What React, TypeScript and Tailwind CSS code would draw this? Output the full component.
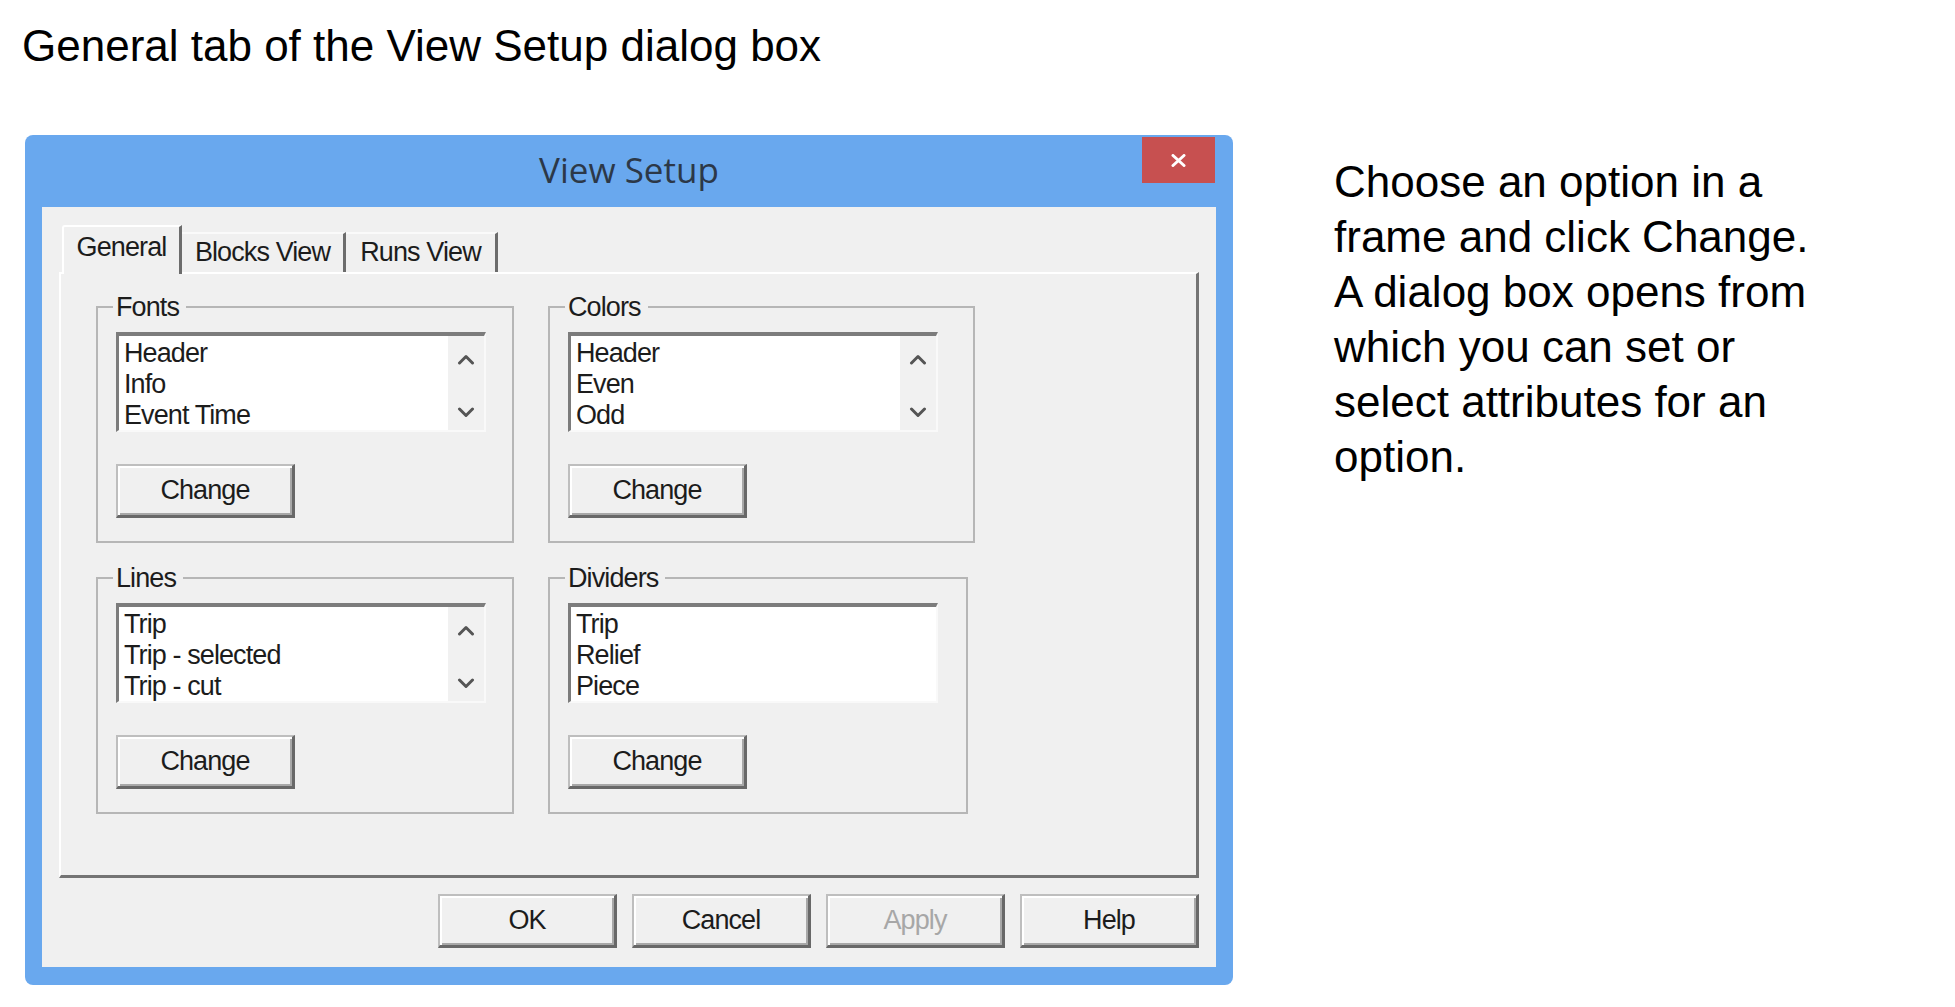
import React from 'react';

const uiFont = "font-['Liberation_Sans',Arial,sans-serif] text-[27px] tracking-[-0.9px] text-[#1c1c1c]";

interface ClassicButtonProps {
  label: string;
  disabled?: boolean;
}

function ClassicButton({ label, disabled }: ClassicButtonProps) {
  return (
    <button
      className={`flex h-[54px] w-[179px] items-center justify-center border-t-2 border-l-2 border-r-[3px] border-b-[3px] border-t-[#bebebe] border-l-[#bebebe] border-r-[#686868] border-b-[#686868] bg-[#f0f0f0] leading-none shadow-[inset_2px_2px_0_#ffffff,inset_-2px_-2px_0_#a8a8a8] ${
        disabled ? 'text-[#a7a7a7]' : 'text-[#1c1c1c]'
      }`}
    >
      {label}
    </button>
  );
}

function Chevron({ up }: { up?: boolean }) {
  return (
    <svg width="18" height="11" viewBox="0 0 18 11" fill="none">
      <polyline
        points={up ? '2.5,9 9,2.5 15.5,9' : '2.5,2 9,8.5 15.5,2'}
        stroke="#555555"
        strokeWidth="3"
        strokeLinecap="round"
        strokeLinejoin="round"
      />
    </svg>
  );
}

interface ListBoxProps {
  items: string[];
  scroll?: boolean;
}

function ListBox({ items, scroll }: ListBoxProps) {
  return (
    <div className="flex h-[100px] w-[370px] overflow-hidden border-t-4 border-l-[3px] border-r-2 border-b-2 border-t-[#7c7c7c] border-l-[#7c7c7c] border-r-[#f9f9f9] border-b-[#f9f9f9] bg-white">
      <ul className="flex-1 pl-[5px] pt-[2px] leading-[31px]">
        {items.map((item) => (
          <li key={item} className="whitespace-nowrap">
            {item}
          </li>
        ))}
      </ul>
      {scroll && (
        <div className="flex w-[36px] flex-col items-center justify-between bg-[#f1f1f1] pt-[18px] pb-[12px]">
          <Chevron up />
          <Chevron />
        </div>
      )}
    </div>
  );
}

interface GroupProps {
  title: string;
  items: string[];
  scroll?: boolean;
  width: string;
}

function Group({ title, items, scroll, width }: GroupProps) {
  return (
    <fieldset className={`${width} border-2 border-[#b6b6b6] pl-[18px] pb-[23px]`}>
      <legend className="-ml-[3px] pl-[3px] pr-[7px] leading-[24px]">{title}</legend>
      <div className="mt-[13px]">
        <ListBox items={items} scroll={scroll} />
      </div>
      <div className="mt-[32px]">
        <ClassicButton label="Change" />
      </div>
    </fieldset>
  );
}

function ViewSetupDialog() {
  const tabs = [
    { name: 'General', width: 'w-[120px]' },
    { name: 'Blocks View', width: 'w-[164px]' },
    { name: 'Runs View', width: 'w-[152px]' },
  ];

  return (
    <div className="flex h-[850px] w-[1208px] flex-col rounded-[8px] bg-[#69a8ee]">
      {/* title bar */}
      <div className="grid h-[72px] grid-cols-[1fr_auto_1fr] items-start">
        <div />
        <div className="pt-[17px] font-['Open_Sans','Noto_Sans',sans-serif] text-[35px] leading-none text-[#2c3848]">
          View Setup
        </div>
        <div className="flex justify-end pr-[18px] pt-[2px]">
          <div className="flex h-[46px] w-[73px] items-center justify-center bg-[#c75050]">
            <svg width="15" height="13" viewBox="0 0 15 13">
              <path d="M2 1.5 L13 11.5 M13 1.5 L2 11.5" stroke="#ffffff" strokeWidth="3" strokeLinecap="round" />
            </svg>
          </div>
        </div>
      </div>

      {/* client area */}
      <div className={`mx-[17px] mb-[18px] flex flex-1 flex-col bg-[#f0f0f0] px-[17px] pt-[18px] ${uiFont}`}>
        <div className="relative z-10 -mb-[2px] flex items-end pl-[3px]">
          {tabs.map((tab, i) =>
            i === 0 ? (
              <div
                key={tab.name}
                className={`${tab.width} flex h-[49px] justify-center rounded-tl-[3px] border-l-2 border-t-2 border-r-[3px] border-l-white border-t-white border-r-[#6c6c6c] bg-[#f0f0f0] pt-[8px] leading-[24px]`}
              >
                {tab.name}
              </div>
            ) : (
              <div
                key={tab.name}
                className={`${tab.width} mb-[2px] flex h-[40px] justify-center border-t-2 border-r-[3px] border-t-[#fafafa] border-r-[#6c6c6c] pt-[6px] leading-[24px]`}
              >
                {tab.name}
              </div>
            ),
          )}
        </div>

        <div className="h-[606px] border-l-2 border-t-2 border-r-[3px] border-b-[3px] border-l-white border-t-white border-r-[#747474] border-b-[#747474] pl-[35px] pt-[21px]">
          <div className="grid grid-cols-[418px_427px] gap-x-[34px] gap-y-[23px]">
            <Group title="Fonts" items={['Header', 'Info', 'Event Time']} scroll width="w-[418px]" />
            <Group title="Colors" items={['Header', 'Even', 'Odd']} scroll width="w-[427px]" />
            <Group title="Lines" items={['Trip', 'Trip - selected', 'Trip - cut']} scroll width="w-[418px]" />
            <Group title="Dividers" items={['Trip', 'Relief', 'Piece']} width="w-[420px]" />
          </div>
        </div>

        <div className="mt-[16px] flex justify-end gap-[15px]">
          <ClassicButton label="OK" />
          <ClassicButton label="Cancel" />
          <ClassicButton label="Apply" disabled />
          <ClassicButton label="Help" />
        </div>
      </div>
    </div>
  );
}

export default function App() {
  const notes = [
    'Choose an option in a',
    'frame and click Change.',
    'A dialog box opens from',
    'which you can set or',
    'select attributes for an',
    'option.',
  ];

  return (
    <div className="h-[1007px] w-[1955px] bg-white font-['Liberation_Sans',Arial,sans-serif] text-black">
      <div className="pl-[22px] pt-[24px] text-[44px] leading-none">General tab of the View Setup dialog box</div>
      <div className="mt-[67px] flex items-start pl-[25px]">
        <ViewSetupDialog />
        <div className="ml-[101px] mt-[19px] text-[44px] leading-[55px]">
          {notes.map((line) => (
            <div key={line} className="whitespace-nowrap">
              {line}
            </div>
          ))}
        </div>
      </div>
    </div>
  );
}
